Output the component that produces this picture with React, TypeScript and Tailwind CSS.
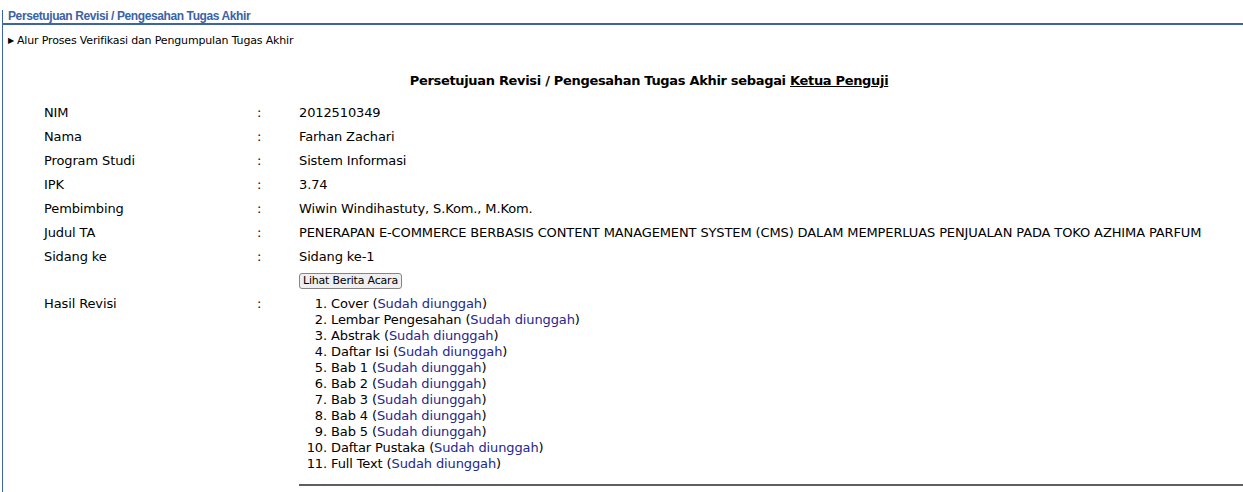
import React from "react";

const rows: [string, string][] = [
  ["NIM", "2012510349"],
  ["Nama", "Farhan Zachari"],
  ["Program Studi", "Sistem Informasi"],
  ["IPK", "3.74"],
  ["Pembimbing", "Wiwin Windihastuty, S.Kom., M.Kom."],
  ["Judul TA", "PENERAPAN E-COMMERCE BERBASIS CONTENT MANAGEMENT SYSTEM (CMS) DALAM MEMPERLUAS PENJUALAN PADA TOKO AZHIMA PARFUM"],
  ["Sidang ke", "Sidang ke-1"],
];

const items = [
  "Cover",
  "Lembar Pengesahan",
  "Abstrak",
  "Daftar Isi",
  "Bab 1",
  "Bab 2",
  "Bab 3",
  "Bab 4",
  "Bab 5",
  "Daftar Pustaka",
  "Full Text",
];

export default function App() {
  return (
    <div
      className="w-[1243px] h-[492px] overflow-hidden bg-white text-[13px] tracking-[-0.12px] text-black"
      style={{ fontFamily: '"DejaVu Sans", sans-serif' }}
    >
      <div className="mt-[10px] ml-[2px] h-[482px] border-l border-[#3a66a6]">
        <div className="border-b-2 border-[#3a66a6] h-[15px] pl-[5px]">
          <span
            className="block text-[12px] font-bold leading-[13px] tracking-[-0.4px] text-[#3a63a6]"
            style={{ fontFamily: '"Liberation Sans", Arial, sans-serif' }}
          >
            Persetujuan Revisi / Pengesahan Tugas Akhir
          </span>
        </div>
        <div className="mt-[9px] pl-[5px] text-[11px] tracking-[-0.16px] leading-[14px] flex items-center">
          <span className="text-[8px] mr-[3px]">▶</span>
          <span>Alur Proses Verifikasi dan Pengumpulan Tugas Akhir</span>
        </div>
        <div className="mt-[25px] pl-[52px] text-center font-bold tracking-[-0.32px] leading-[16px]">
          Persetujuan Revisi / Pengesahan Tugas Akhir sebagai <span className="underline">Ketua Penguji</span>
        </div>
        <div className="mt-[12px] pl-[41px] grid grid-cols-[213px_42px_1fr]">
          {rows.map(([k, v]) => (
            <React.Fragment key={k}>
              <div className="h-[24px] leading-[24px]">{k}</div>
              <div className="h-[24px] leading-[24px]">:</div>
              <div className="h-[24px] leading-[24px] whitespace-nowrap">{v}</div>
            </React.Fragment>
          ))}
          <div className="h-[24px]" />
          <div className="h-[24px]" />
          <div className="h-[24px] flex items-center">
            <button className="h-[16px] px-[3px] text-[11px] tracking-[-0.2px] leading-[14px] bg-[#efefef] border border-[#858585] rounded-[3px] -mt-[1px]">
              Lihat Berita Acara
            </button>
          </div>
          <div className="pt-[3px] leading-[16px]">Hasil Revisi</div>
          <div className="pt-[3px] leading-[16px]">:</div>
          <div className="pt-[3px]">
            <ol className="list-decimal pl-[32px] leading-[16px]">
              {items.map((it) => (
                <li key={it}>
                  {it} (<span className="text-[#26268c]">Sudah diunggah</span>)
                </li>
              ))}
            </ol>
            <div className="mt-[12px] border-t-2 border-[#5e5e5e]" />
          </div>
        </div>
      </div>
    </div>
  );
}
